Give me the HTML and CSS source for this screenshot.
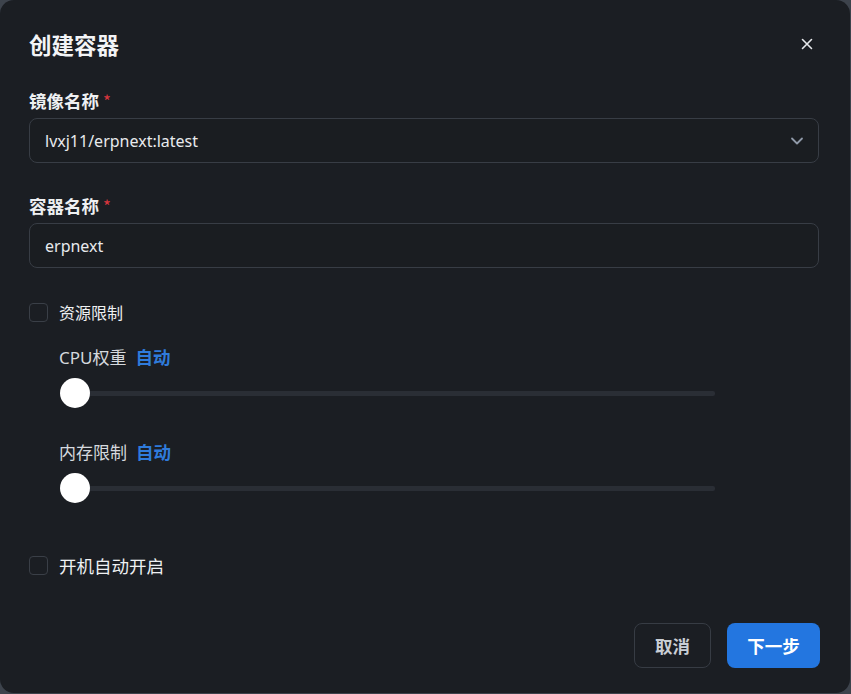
FILE: index.html
```html
<!DOCTYPE html>
<html lang="zh-CN">
<head>
<meta charset="utf-8">
<title>创建容器</title>
<link rel="stylesheet" href="styles.css">
</head>
<body>
<div class="dialog">
  <div class="header">
    <h1 class="title">创建容器</h1>
    <button class="close" aria-label="关闭">
      <svg width="12" height="12" viewBox="0 0 12 12"><path d="M1.5 1.5 L10.5 10.5 M10.5 1.5 L1.5 10.5" stroke="#e6e8eb" stroke-width="1.6" stroke-linecap="round"/></svg>
    </button>
  </div>

  <div class="field">
    <label class="label">镜像名称 <span class="req">*</span></label>
    <div class="input select">
      <span>lvxj11/erpnext:latest</span>
      <svg class="chev" width="14" height="14" viewBox="0 0 14 14"><path d="M2 4.5 L7 9.5 L12 4.5" fill="none" stroke="#8f99a8" stroke-width="1.8" stroke-linecap="round" stroke-linejoin="round"/></svg>
    </div>
  </div>

  <div class="field second">
    <label class="label">容器名称 <span class="req">*</span></label>
    <div class="input"><span>erpnext</span></div>
  </div>

  <div class="check small">
    <span class="box"></span>
    <span>资源限制</span>
  </div>

  <div class="limits">
    <div class="limit">
      <div class="limit-label">CPU权重<span class="auto">自动</span></div>
      <div class="slider"><span class="track"></span><span class="thumb"></span></div>
    </div>
    <div class="limit">
      <div class="limit-label">内存限制<span class="auto">自动</span></div>
      <div class="slider"><span class="track"></span><span class="thumb"></span></div>
    </div>
  </div>

  <div class="check large">
    <span class="box"></span>
    <span>开机自动开启</span>
  </div>

  <div class="footer">
    <button class="btn cancel">取消</button>
    <button class="btn primary">下一步</button>
  </div>
</div>
</body>
</html>
```

FILE: styles.css
```css
* { box-sizing: border-box; }
html, body {
  margin: 0;
  padding: 0;
  background: #3d434c;
  width: 851px;
  height: 694px;
  overflow: hidden;
  font-family: "Noto Sans", "Noto Sans CJK SC", sans-serif;
}
.dialog {
  width: 850px;
  height: 693px;
  background: #1b1e23;
  border-radius: 14px;
  padding: 0 29px 0 29px;
  display: flex;
  flex-direction: column;
  color: #eef0f2;
}
.header {
  display: flex;
  align-items: center;
  justify-content: space-between;
  height: 89px;
  padding-bottom: 2px;
}
.title {
  margin: 0;
  font-size: 22.5px;
  font-weight: 700;
  font-family: "Noto Sans CJK SC", sans-serif;
  color: #f3f4f6;
}
.close {
  background: none;
  border: none;
  padding: 0;
  margin-right: 7px;
  width: 14px;
  height: 14px;
  display: flex;
  align-items: center;
  justify-content: center;
}
.field { display: flex; flex-direction: column; }
.field.second { margin-top: 31px; }
.label {
  font-family: "Noto Sans CJK SC", sans-serif;
  font-size: 17.5px;
  font-weight: 700;
  color: #eef0f2;
  line-height: 24px;
  margin-bottom: 5px;
}
.req { color: #d9363e; font-weight: 400; font-size: 17px; }
.input {
  height: 45px;
  border: 1px solid #383d45;
  border-radius: 8px;
  background: #1a1d21;
  display: flex;
  align-items: center;
  justify-content: space-between;
  padding: 0 14px 0 15px;
  font-size: 16px;
  color: #e8eaed;
  width: 790px;
}
.chev { margin-top: 1px; }
.check {
  display: flex;
  align-items: center;
  gap: 11px;
  font-family: "Noto Sans CJK SC", sans-serif;
  color: #eef0f2;
}
.check.small { margin-top: 34px; font-size: 16px; height: 20px; }
.check.large { margin-top: 51px; font-size: 17.5px; height: 20px; }
.box {
  width: 19px;
  height: 19px;
  border: 1.5px solid #3a3f47;
  border-radius: 4px;
  background: #1b1e23;
}
.limits {
  padding-left: 30px;
  margin-top: 23px;
  display: flex;
  flex-direction: column;
  gap: 31px;
}
.limit-label {
  font-family: "Noto Sans", "Noto Sans CJK SC", sans-serif;
  font-size: 17px;
  color: #d5d9de;
  line-height: 24px;
}
.auto {
  color: #2f7bdb;
  font-weight: 700;
  margin-left: 9px;
  font-size: 17.5px;
  font-family: "Noto Sans CJK SC", sans-serif;
}
.slider {
  position: relative;
  width: 656px;
  height: 32px;
  margin-top: 7px;
  display: flex;
  align-items: center;
}
.track {
  display: block;
  margin-left: 16px;
  width: 640px;
  height: 5px;
  background: #2a2e35;
  border-radius: 2px;
}
.thumb {
  position: absolute;
  left: 1px;
  top: 1px;
  width: 30px;
  height: 30px;
  border-radius: 50%;
  background: #ffffff;
}
.footer {
  margin-top: auto;
  margin-bottom: 25px;
  display: flex;
  justify-content: flex-end;
  gap: 16px;
}
.btn {
  height: 45px;
  border-radius: 8px;
  font-family: "Noto Sans CJK SC", sans-serif;
  font-size: 17.5px;
  font-weight: 700;
  cursor: pointer;
}
.cancel {
  width: 77px;
  background: #1b1e23;
  border: 1px solid #373c44;
  color: #c9ced5;
}
.primary {
  width: 93px;
  background: #2376e0;
  border: none;
  color: #ffffff;
  margin-right: 1px;
}
```
